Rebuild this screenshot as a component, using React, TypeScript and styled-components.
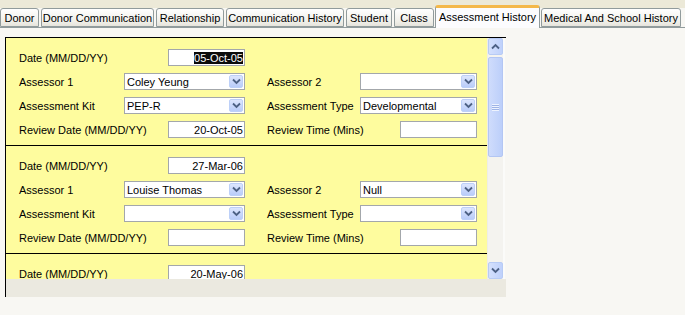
import styled, { createGlobalStyle } from 'styled-components';

const GlobalStyle = createGlobalStyle`
  body {
    margin: 0;
    background: #f8f7f3;
    font-family: 'Liberation Sans', Arial, sans-serif;
    font-size: 11px;
    color: #000;
  }
`;

const tabs = [
  { label: 'Donor', width: 39 },
  { label: 'Donor Communication', width: 113 },
  { label: 'Relationship', width: 68 },
  { label: 'Communication History', width: 118 },
  { label: 'Student', width: 46 },
  { label: 'Class', width: 40 },
  { label: 'Assessment History', width: 105, active: true },
  { label: 'Medical And School History', width: 140 },
];

type Rec = {
  date: string;
  selected?: boolean;
  partial?: boolean;
  assessor1: string;
  assessor2: string;
  kit: string;
  type: string;
  review: string;
  mins: string;
};

const records: Rec[] = [
  {
    date: '05-Oct-05',
    selected: true,
    assessor1: 'Coley Yeung',
    assessor2: '',
    kit: 'PEP-R',
    type: 'Developmental',
    review: '20-Oct-05',
    mins: '',
  },
  {
    date: '27-Mar-06',
    assessor1: 'Louise Thomas',
    assessor2: 'Null',
    kit: '',
    type: '',
    review: '',
    mins: '',
  },
  // only the top of the third record is scrolled into view
  {
    date: '20-May-06',
    partial: true,
    assessor1: '',
    assessor2: '',
    kit: '',
    type: '',
    review: '',
    mins: '',
  },
];

function Chevron({ up }: { up?: boolean }) {
  return (
    <svg width='9' height='7' viewBox='0 0 9 7'>
      <path
        d={up ? 'M1 5.5L4.5 2L8 5.5' : 'M1 1.5L4.5 5L8 1.5'}
        fill='none'
        stroke='#4d6185'
        strokeWidth='1.8'
      />
    </svg>
  );
}

function Combo({ value, width }: { value: string; width: number }) {
  return (
    <ComboBox $w={width}>
      <span>{value}</span>
      <ComboBtn>
        <Chevron />
      </ComboBtn>
    </ComboBox>
  );
}

function Record({ rec }: { rec: Rec }) {
  return (
    <RecordBox>
      <Row>
        <Half>
          <Label>Date (MM/DD/YY)</Label>
          <TextBox $w={77}>
            {rec.selected ? <Selected>{rec.date}</Selected> : rec.date}
          </TextBox>
        </Half>
      </Row>
      {!rec.partial && (
        <>
          <Row>
            <Half>
              <Label>Assessor 1</Label>
              <Combo value={rec.assessor1} width={121} />
            </Half>
            <RightHalf>
              <Label>Assessor 2</Label>
              <Combo value={rec.assessor2} width={117} />
            </RightHalf>
          </Row>
          <Row>
            <Half>
              <Label>Assessment Kit</Label>
              <Combo value={rec.kit} width={121} />
            </Half>
            <RightHalf>
              <Label>Assessment Type</Label>
              <Combo value={rec.type} width={117} />
            </RightHalf>
          </Row>
          <Row>
            <Half>
              <Label>Review Date (MM/DD/YY)</Label>
              <TextBox $w={77}>{rec.review}</TextBox>
            </Half>
            <RightHalf>
              <Label>Review Time (Mins)</Label>
              <TextBox $w={77}>{rec.mins}</TextBox>
            </RightHalf>
          </Row>
        </>
      )}
    </RecordBox>
  );
}

export default function App() {
  return (
    <>
      <GlobalStyle />
      <TabStrip>
        {tabs.map((t) => (
          <Tab key={t.label} $w={t.width} $active={!!t.active}>
            {t.label}
          </Tab>
        ))}
      </TabStrip>
      <Body>
        <Panel>
          <ScrollArea>
            <Records>
              {records.map((r, i) => (
                <Record rec={r} key={i} />
              ))}
            </Records>
            <ScrollCol>
              <ScrollBar>
                <ScrollBtn>
                  <Chevron up />
                </ScrollBtn>
                <Thumb>
                  <Grip />
                </Thumb>
                <Track />
                <ScrollBtn>
                  <Chevron />
                </ScrollBtn>
              </ScrollBar>
            </ScrollCol>
          </ScrollArea>
          <Footer />
        </Panel>
      </Body>
    </>
  );
}

const TabStrip = styled.div`
  height: 27px;
  display: flex;
  align-items: flex-end;
  gap: 2px;
  background: linear-gradient(#ece9d8 0, #ece9d8 8px, #f8f7f3 8px);
  border-bottom: 1px solid #919b9c;
`;

const Tab = styled.div<{ $w: number; $active: boolean }>`
  width: ${(p) => p.$w}px;
  box-sizing: border-box;
  height: ${(p) => (p.$active ? 23 : 19)}px;
  margin-bottom: ${(p) => (p.$active ? -1 : 0)}px;
  margin-left: ${(p) => (p.$active ? -1 : 0)}px;
  margin-right: ${(p) => (p.$active ? -1 : 0)}px;
  display: flex;
  align-items: center;
  justify-content: center;
  padding-bottom: ${(p) => (p.$active ? 3 : 0)}px;
  border: 1px solid #919b9c;
  border-bottom: ${(p) => (p.$active ? 'none' : '1px solid #919b9c')};
  border-top: ${(p) => (p.$active ? '3px solid #f4b84a' : '1px solid #919b9c')};
  border-radius: 3px 3px 0 0;
  background: ${(p) =>
    p.$active ? '#fcfcfe' : 'linear-gradient(#ffffff, #f1f0ea 70%, #e6e4dc)'};
  white-space: nowrap;
  position: relative;
  z-index: ${(p) => (p.$active ? 1 : 0)};
`;

const Body = styled.div`
  padding: 9px 0 0 5px;
`;

const Panel = styled.div`
  width: 500px;
  border-left: 1px solid #000;
  border-top: 1px solid #000;
`;

const ScrollArea = styled.div`
  height: 241px;
  display: flex;
`;

const Records = styled.div`
  width: 481px;
  overflow: hidden;
  background: #fefc9e;
`;

const RecordBox = styled.div`
  padding: 11px 0 7px 13px;
  border-bottom: 1px solid #000;
  display: flex;
  flex-direction: column;
  gap: 7px;
`;

const Row = styled.div`
  display: flex;
  height: 17px;
  gap: 22px;
`;

const Half = styled.div`
  width: 226px;
  display: flex;
  align-items: center;
  justify-content: space-between;
`;

const RightHalf = styled(Half)`
  width: 210px;
`;

const Label = styled.span`
  white-space: nowrap;
`;

const TextBox = styled.div<{ $w: number }>`
  width: ${(p) => p.$w}px;
  height: 17px;
  box-sizing: border-box;
  border: 1px solid #a3a7ab;
  background: #fff;
  display: flex;
  align-items: center;
  justify-content: flex-end;
  padding-right: 1px;
  overflow: hidden;
  white-space: nowrap;
`;

const Selected = styled.span`
  background: #0b0b0b;
  color: #fff;
`;

const ComboBox = styled.div<{ $w: number }>`
  width: ${(p) => p.$w}px;
  height: 17px;
  box-sizing: border-box;
  border: 1px solid #a3a7ab;
  background: #fff;
  display: flex;
  align-items: center;
  justify-content: space-between;
  padding: 0 1px 0 2px;
  white-space: nowrap;
`;

const ComboBtn = styled.div`
  width: 14px;
  height: 13px;
  box-sizing: border-box;
  border: 1px solid #bdd0f8;
  border-radius: 2px;
  background: linear-gradient(#dde6fe, #b9ccf9);
  display: flex;
  align-items: center;
  justify-content: center;
`;

const ScrollCol = styled.div`
  width: 18px;
  background: #fbfbf9;
`;

const ScrollBar = styled.div`
  width: 16px;
  height: 241px;
  display: flex;
  flex-direction: column;
  background: #f4f3ef;
  border-left: 1px solid #eeede8;
  box-sizing: border-box;
`;

const ScrollBtn = styled.div`
  height: 17px;
  box-sizing: border-box;
  border: 1px solid #b7cbf5;
  border-radius: 2px;
  background: linear-gradient(90deg, #d4e0fd, #bfd1fb);
  display: flex;
  align-items: center;
  justify-content: center;
`;

const Thumb = styled.div`
  margin-top: 2px;
  height: 100px;
  box-sizing: border-box;
  border: 1px solid #b3c6f3;
  border-radius: 2px;
  background: linear-gradient(90deg, #cfdcfc, #bccffa);
  display: flex;
  align-items: center;
  justify-content: center;
`;

const Grip = styled.div`
  width: 7px;
  height: 7px;
  background: repeating-linear-gradient(
    #eef3fe 0,
    #eef3fe 1px,
    #9fb4e6 1px,
    #9fb4e6 2px
  );
`;

const Track = styled.div`
  flex: 1;
`;

const Footer = styled.div`
  height: 18px;
  background: #ebe9e0;
`;
